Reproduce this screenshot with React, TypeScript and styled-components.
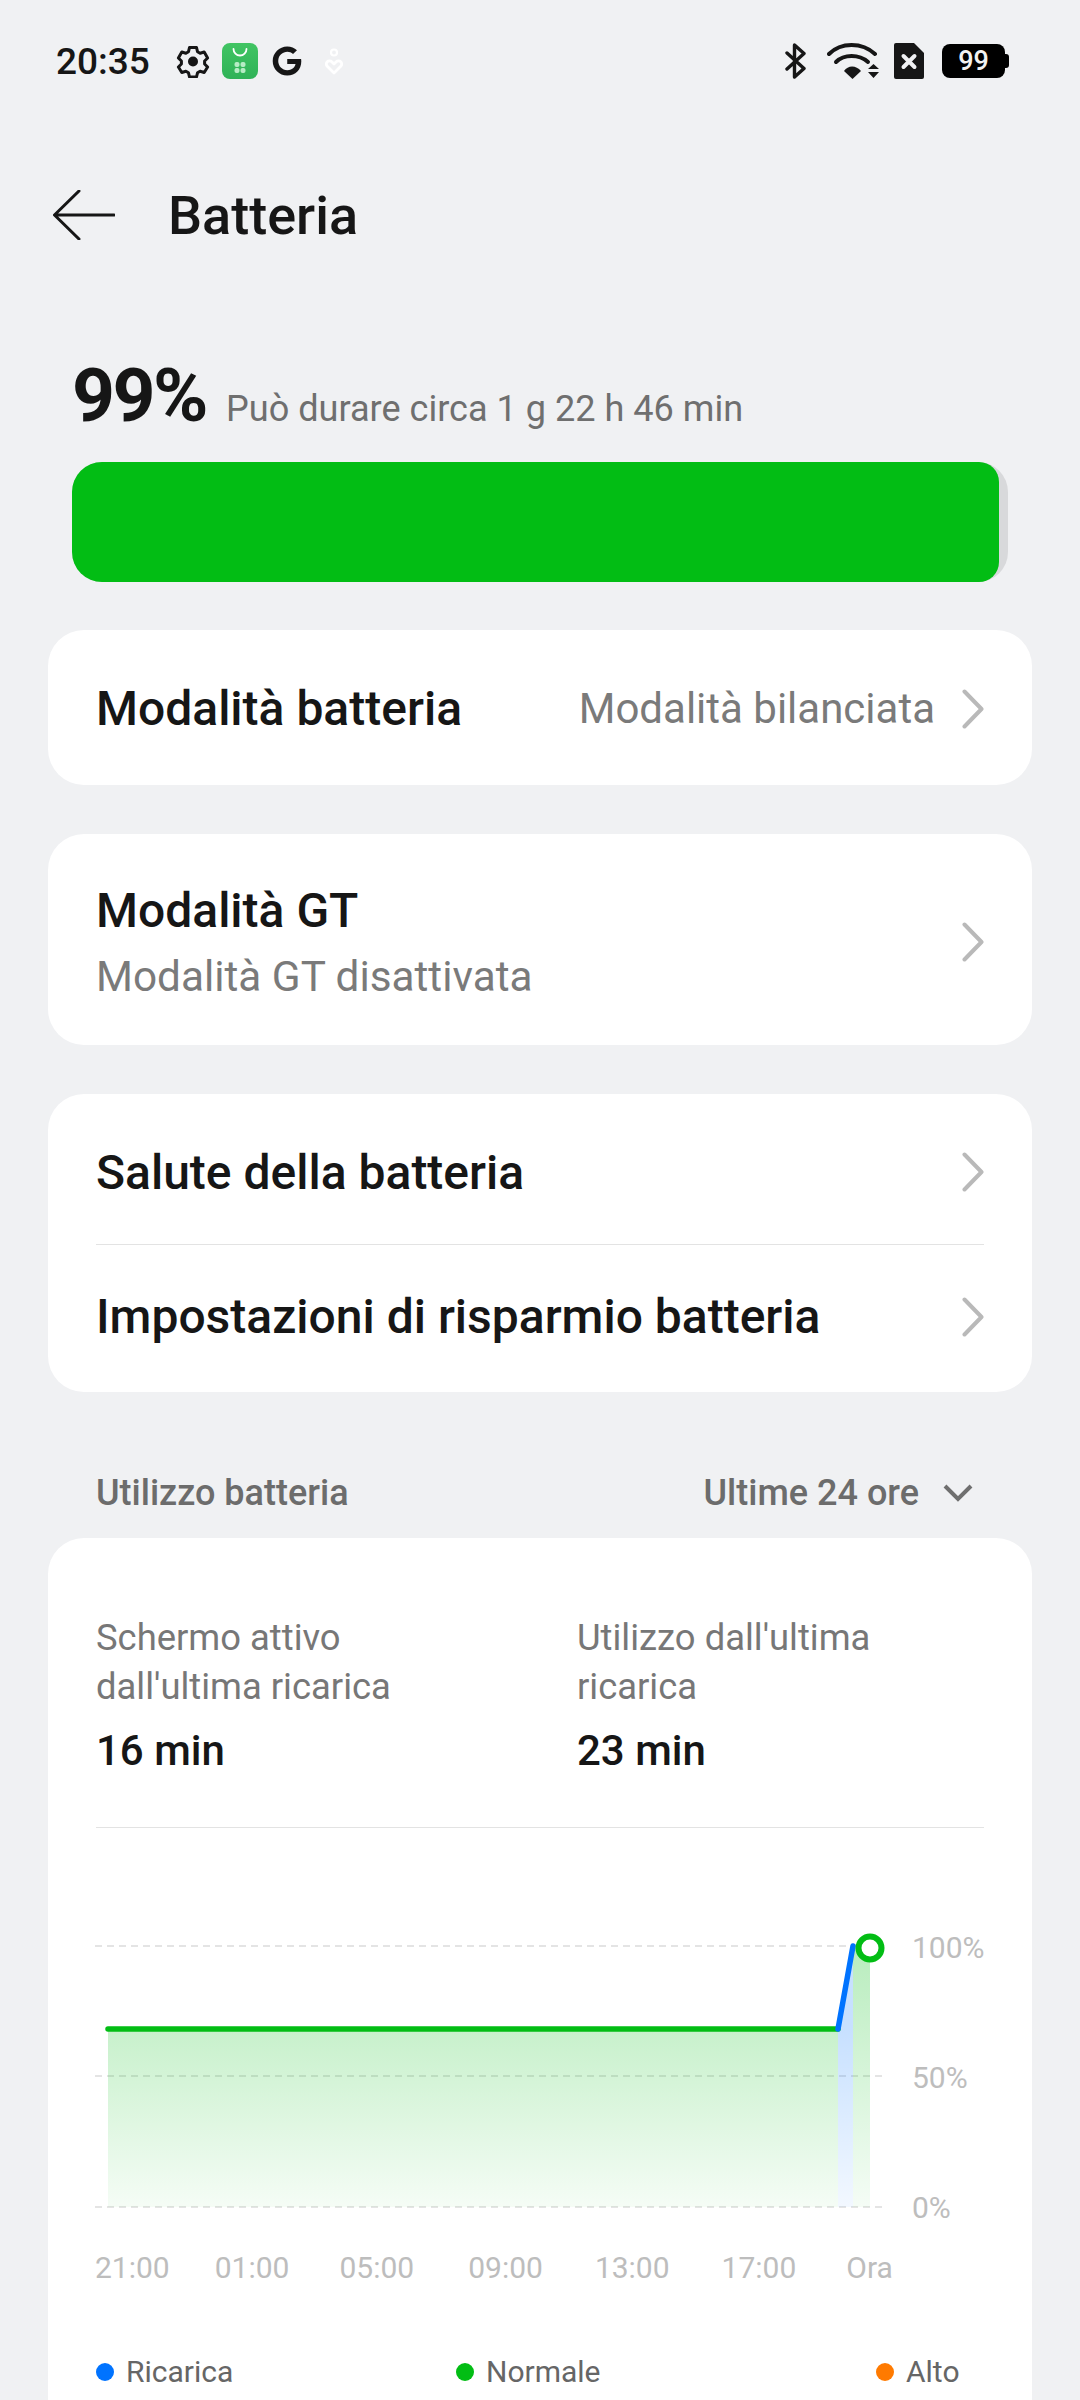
import React from 'react'
import styled, { createGlobalStyle } from 'styled-components'
import { FaGoogle } from 'react-icons/fa'

const GlobalStyle = createGlobalStyle`
  html, body {
    margin: 0;
    padding: 0;
    background: #f0f1f3;
  }
  body {
    font-family: Roboto, "Noto Sans", sans-serif;
    color: #161616;
    -webkit-font-smoothing: antialiased;
  }
`

const Page = styled.div`
  width: 1080px;
  height: 2400px;
  overflow: hidden;
  background: #f0f1f3;
`

const StatusBar = styled.div`
  display: flex;
  align-items: center;
  justify-content: space-between;
  box-sizing: border-box;
  height: 122px;
  padding: 0 75px 0 56px;
`

const StatusGroup = styled.div`
  display: flex;
  align-items: center;
`

const Clock = styled.span`
  font-size: 37px;
  font-weight: 500;
  margin-right: 26px;
`

const StoreIcon = styled.svg`
  margin: 0 14px 0 12px;
`

const BatteryPill = styled.div`
  position: relative;
  width: 63px;
  height: 34px;
  margin-left: 18px;
  border-radius: 8px;
  background: #000;
  color: #f2f2f2;
  font-size: 27px;
  font-weight: 500;
  line-height: 34px;
  text-align: center;

  &::after {
    content: '';
    position: absolute;
    right: -4px;
    top: 10px;
    width: 4px;
    height: 14px;
    border-radius: 0 3px 3px 0;
    background: #000;
  }
`

const Header = styled.div`
  display: flex;
  align-items: center;
  height: 80px;
  margin-top: 53px;
  padding-left: 53px;
`

const Title = styled.h1`
  margin: 0 0 0 53px;
  font-size: 54px;
  font-weight: 500;
`

const Summary = styled.div`
  display: flex;
  align-items: baseline;
  margin-top: 90px;
  padding-left: 72px;
  height: 100px;
`

const Percent = styled.span`
  font-size: 75px;
  font-weight: 700;
  line-height: 100px;
  letter-spacing: -2.500px;
`

const Estimate = styled.span`
  margin-left: 20px;
  font-size: 36.100px;
  color: #6f6f6f;
`

const Track = styled.div`
  width: 936px;
  height: 120px;
  margin: 17px 0 0 72px;
  border-radius: 30px;
  background: #d8d9db;
`

const Fill = styled.div<{ $width: number }>`
  width: ${p => p.$width}%;
  height: 100%;
  border-radius: 30px 20px 20px 30px;
  background: #02bd14;
`

const Card = styled.section<{ $mt: number }>`
  box-sizing: border-box;
  width: 984px;
  margin: ${p => p.$mt}px 0 0 48px;
  padding: 0 48px;
  border-radius: 36px;
  background: #fff;
`

const Row = styled.div<{ $h: number; $pt?: number; $pb?: number }>`
  display: flex;
  align-items: center;
  justify-content: space-between;
  box-sizing: border-box;
  height: ${p => p.$h}px;
  padding: ${p => p.$pt || 0}px 0 ${p => p.$pb || 0}px;
`

const RowText = styled.div`
  display: flex;
  flex-direction: column;
`

const RowTitle = styled.span`
  font-size: 48px;
  font-weight: 500;
`

const RowSub = styled.span`
  margin-top: 13px;
  font-size: 42.300px;
  color: #7a7a7a;
`

const RowRight = styled.div`
  display: flex;
  align-items: center;
  color: #7a7a7a;
  font-size: 42px;
`

const ChevronIcon = styled.svg`
  flex: none;
  margin-left: 27px;
`

const Divider = styled.div`
  height: 1px;
  background: #e3e3e3;
`

const SectionHead = styled.div`
  display: flex;
  align-items: center;
  justify-content: space-between;
  box-sizing: border-box;
  height: 50px;
  margin-top: 75px;
  padding: 2px 107px 0 96px;
  color: #6c6c6c;
  font-size: 36px;
  font-weight: 500;
`

const Picker = styled.div`
  display: flex;
  align-items: center;
  gap: 24px;
`

const UsageCard = styled(Card)`
  height: 1000px;
`

const Stats = styled.div`
  display: grid;
  grid-template-columns: 481px 1fr;
  padding-top: 75px;
  height: 214px;
`

const StatLabel = styled.div`
  font-size: 36.400px;
  line-height: 49px;
  color: #777;
`

const StatValue = styled.div`
  margin-top: 15px;
  font-size: 42px;
  font-weight: 500;
  line-height: 50px;
`

const ChartRow = styled.div`
  display: flex;
  margin: 102px -48px 0 -1px;
`

const PercentAxis = styled.div`
  display: flex;
  flex-direction: column;
  justify-content: space-between;
  height: 296px;
  margin-left: 17px;
  font-size: 30px;
  line-height: 36px;
  color: #bdbdbd;
`

const TimeAxis = styled.div`
  display: flex;
  margin: 24px 0 0 -1px;
  font-size: 30px;
  line-height: 36px;
  color: #bdbdbd;
`

const Tick = styled.span<{ $gap: number }>`
  margin-left: ${p => p.$gap}px;
`

const Legend = styled.div`
  display: grid;
  grid-template-columns: 360px 420px 1fr;
  margin-top: 68px;
`

const LegendItem = styled.div`
  display: flex;
  align-items: center;
  gap: 12px;
  font-size: 30px;
  line-height: 36px;
  color: #666;
`

const Dot = styled.i<{ $color: string }>`
  width: 18px;
  height: 18px;
  border-radius: 50%;
  background: ${p => p.$color};
`

const ticks = [
  { label: '21:00', gap: 0 },
  { label: '01:00', gap: 45 },
  { label: '05:00', gap: 50 },
  { label: '09:00', gap: 54 },
  { label: '13:00', gap: 52 },
  { label: '17:00', gap: 52 },
  { label: 'Ora', gap: 50 },
]

const Chevron = () => (
  <ChevronIcon width="22" height="40" viewBox="0 0 22 40" fill="none">
    <path d="M2.500 2.500L19.500 20 2.500 37.500" stroke="#b9b9b9" strokeWidth="4" strokeLinecap="round" strokeLinejoin="round" />
  </ChevronIcon>
)

const CaretDown = () => (
  <svg width="30" height="18" viewBox="0 0 30 18" fill="none">
    <path d="M2 2l13 13L28 2" stroke="#6f6f6f" strokeWidth="4" />
  </svg>
)

const Gear = () => (
  <svg width="34" height="34" viewBox="0 0 34 34" fill="none">
    <path
      d="M13.500 3.500h7l1 4.200 2.600 1.500 4.100-1.200 3.400 6-3 3v3l3 3-3.400 5.500-4.100-1.200-2.600 1.500-1 4.200h-7l-1-4.200-2.600-1.500-4.100 1.200-3.400-5.500 3-3v-3l-3-3 3.400-6 4.100 1.200 2.600-1.500z"
      stroke="#161616"
      strokeWidth="3"
      strokeLinejoin="round"
    />
    <circle cx="17" cy="17.500" r="5" fill="#161616" />
  </svg>
)

const Store = () => (
  <StoreIcon width="36" height="36" viewBox="0 0 36 36">
    <defs>
      <linearGradient id="store" x1="0" y1="0" x2="0" y2="1">
        <stop offset="0" stopColor="#41c463" />
        <stop offset="1" stopColor="#2fb257" />
      </linearGradient>
    </defs>
    <rect width="36" height="36" rx="8" fill="url(#store)" />
    <path d="M11.500 6a6.500 6.500 0 0 0 13 0" fill="none" stroke="#fff" strokeWidth="1.800" strokeLinecap="round" />
    <g fill="#b6ecc4">
      <rect x="12.500" y="19" width="5" height="5" rx="2" />
      <rect x="18.500" y="19" width="5" height="5" rx="2" />
      <rect x="12.500" y="25" width="5" height="5" rx="2" />
      <rect x="18.500" y="25" width="5" height="5" rx="2" />
    </g>
  </StoreIcon>
)

const HeartPerson = () => (
  <svg width="18" height="27" viewBox="0 0 18 27" fill="none" style={{ marginLeft: 23 }}>
    <circle cx="9" cy="4.500" r="3" stroke="#fff" strokeWidth="2.200" />
    <path d="M9 25l-7-7a3.500 3.500 0 0 1 0-4 3.500 3.500 0 0 1 5 0l2 2 2-2a3.500 3.500 0 0 1 5 0 3.500 3.500 0 0 1 0 4z" stroke="#fff" strokeWidth="2.800" strokeLinejoin="round" />
  </svg>
)

const Bluetooth = () => (
  <svg width="21" height="36" viewBox="0 0 21 36" fill="none" style={{ marginLeft: 1 }}>
    <path d="M2 10l17 15.500-9.500 8.500V2L19 10.500 2 26" stroke="#161616" strokeWidth="3.400" strokeLinejoin="round" strokeLinecap="round" />
  </svg>
)

const Wifi = () => (
  <svg width="52" height="36" viewBox="0 0 52 36" fill="none" style={{ marginLeft: 21 }}>
    <path d="M2 11C14 -1 35 -1 48 11" stroke="#161616" strokeWidth="4" strokeLinecap="round" />
    <path d="M9 19C17 11 32 11 41 19" stroke="#161616" strokeWidth="4" strokeLinecap="round" />
    <path d="M17 28C21 22 29 22 34 28L25.500 36Z" fill="#161616" />
    <path d="M41 26l5.500-5 5.500 5zM41 29l5.500 6 5.500-6z" fill="#161616" />
  </svg>
)

const Sim = () => (
  <svg width="30" height="36" viewBox="0 0 30 36" style={{ marginLeft: 15 }}>
    <path d="M2 0h18l10 10v24a2 2 0 0 1-2 2H2a2 2 0 0 1-2-2V2a2 2 0 0 1 2-2z" fill="#161616" />
    <path d="M9.500 13l11 11m0-11l-11 11" stroke="#f0f1f3" strokeWidth="4" strokeLinecap="round" />
  </svg>
)

const BackArrow = () => (
  <svg width="62" height="50" viewBox="0 0 62 50" fill="none">
    <path d="M61 25H2M26 1L1.500 25 26 49" stroke="#161616" strokeWidth="3" strokeLinecap="round" strokeLinejoin="round" />
  </svg>
)

// coordinates are relative to the chart box: x - 95, y - 1930
const Chart = () => (
  <svg width="800" height="296" viewBox="0 0 800 296" fill="none">
    <defs>
      <linearGradient id="greenFill" x1="0" y1="0" x2="0" y2="1">
        <stop offset="0" stopColor="#02bd14" stopOpacity="0.22" />
        <stop offset="1" stopColor="#02bd14" stopOpacity="0.04" />
      </linearGradient>
      <linearGradient id="blueFill" gradientUnits="userSpaceOnUse" x1="0" y1="99" x2="0" y2="277">
        <stop offset="0" stopColor="#0073ff" stopOpacity="0.22" />
        <stop offset="1" stopColor="#0073ff" stopOpacity="0.05" />
      </linearGradient>
      <linearGradient id="greenTall" gradientUnits="userSpaceOnUse" x1="0" y1="16" x2="0" y2="277">
        <stop offset="0" stopColor="#02bd14" stopOpacity="0.28" />
        <stop offset="1" stopColor="#02bd14" stopOpacity="0.04" />
      </linearGradient>
    </defs>
    {[16, 146, 277].map(y => (
      <line key={y} x1="0" x2="788" y1={y} y2={y} stroke="#dcdcdc" strokeWidth="1.500" strokeDasharray="7 5" />
    ))}
    <rect x="13" y="99" width="730" height="178" fill="url(#greenFill)" />
    <path d="M743 99L758 16V277H743Z" fill="url(#blueFill)" />
    <path d="M758 16H775V277H758Z" fill="url(#greenTall)" />
    <path d="M13 99H743" stroke="#02bd14" strokeWidth="5.500" strokeLinecap="round" />
    <path d="M743 99L758 16" stroke="#0073ff" strokeWidth="5.500" strokeLinecap="round" />
    <circle cx="775" cy="18" r="11.500" fill="#fff" stroke="#02bd14" strokeWidth="6" />
  </svg>
)

export default function App() {
  return (
    <Page>
      <GlobalStyle />
      <StatusBar>
        <StatusGroup>
          <Clock>20:35</Clock>
          <Gear />
          <Store />
          <FaGoogle size={30} color="#161616" />
          <HeartPerson />
        </StatusGroup>
        <StatusGroup>
          <Bluetooth />
          <Wifi />
          <Sim />
          <BatteryPill>99</BatteryPill>
        </StatusGroup>
      </StatusBar>

      <Header>
        <BackArrow />
        <Title>Batteria</Title>
      </Header>

      <Summary>
        <Percent>99%</Percent>
        <Estimate>Può durare circa 1 g 22 h 46 min</Estimate>
      </Summary>
      <Track>
        <Fill $width={99} />
      </Track>

      <Card $mt={48}>
        <Row $h={155} $pt={2}>
          <RowTitle>Modalità batteria</RowTitle>
          <RowRight>
            Modalità bilanciata
            <Chevron />
          </RowRight>
        </Row>
      </Card>

      <Card $mt={49}>
        <Row $h={211} $pt={4}>
          <RowText>
            <RowTitle>Modalità GT</RowTitle>
            <RowSub>Modalità GT disattivata</RowSub>
          </RowText>
          <Chevron />
        </Row>
      </Card>

      <Card $mt={49}>
        <Row $h={150} $pt={6}>
          <RowTitle>Salute della batteria</RowTitle>
          <Chevron />
        </Row>
        <Divider />
        <Row $h={147} $pb={4}>
          <RowTitle>Impostazioni di risparmio batteria</RowTitle>
          <Chevron />
        </Row>
      </Card>

      <SectionHead>
        <span>Utilizzo batteria</span>
        <Picker>
          Ultime 24 ore
          <CaretDown />
        </Picker>
      </SectionHead>

      <UsageCard $mt={21}>
        <Stats>
          <div>
            <StatLabel>
              Schermo attivo
              <br />
              dall'ultima ricarica
            </StatLabel>
            <StatValue>16 min</StatValue>
          </div>
          <div>
            <StatLabel>
              Utilizzo dall'ultima
              <br />
              ricarica
            </StatLabel>
            <StatValue>23 min</StatValue>
          </div>
        </Stats>
        <Divider />
        <ChartRow>
          <Chart />
          <PercentAxis>
            <span>100%</span>
            <span>50%</span>
            <span>0%</span>
          </PercentAxis>
        </ChartRow>
        <TimeAxis>
          {ticks.map(t => (
            <Tick key={t.label} $gap={t.gap}>
              {t.label}
            </Tick>
          ))}
        </TimeAxis>
        <Legend>
          <LegendItem>
            <Dot $color="#0073ff" />
            Ricarica
          </LegendItem>
          <LegendItem>
            <Dot $color="#02bd14" />
            Normale
          </LegendItem>
          <LegendItem>
            <Dot $color="#ff7a00" />
            Alto
          </LegendItem>
        </Legend>
      </UsageCard>
    </Page>
  )
}
